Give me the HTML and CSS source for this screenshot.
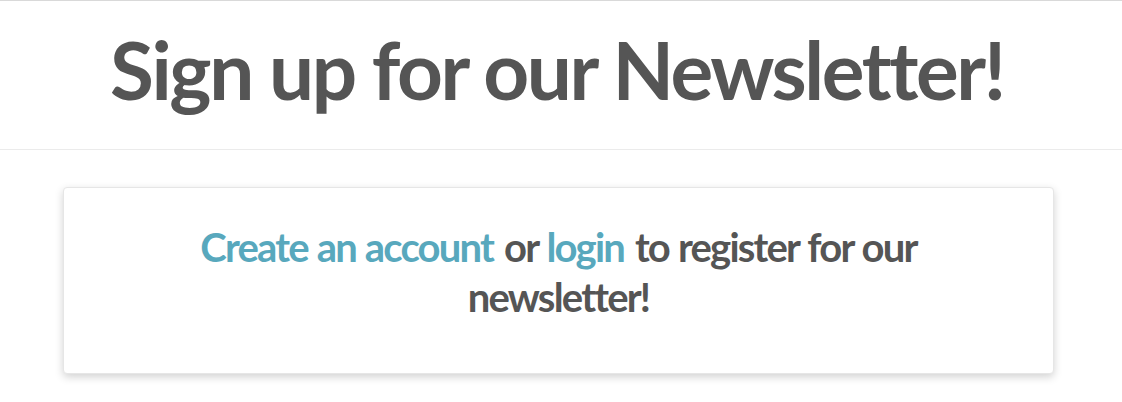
FILE: index.html
```html
<!DOCTYPE html>
<html lang="en">
<head>
<meta charset="utf-8">
<title>Newsletter</title>
<link rel="stylesheet" href="styles.css">
</head>
<body>
<header class="page-header">
  <h1 class="page-title">Sign up for our Newsletter!</h1>
</header>
<main class="content">
  <section class="card">
    <p class="card-text"><a href="#" class="link">Create an account</a> or <a href="#" class="link">login</a> to register for our newsletter!</p>
  </section>
</main>
</body>
</html>
```
FILE: styles.css
```css
html, body {
  margin: 0;
  padding: 0;
  background: #fff;
}
body {
  font-family: "Lato", "Open Sans", sans-serif;
  color: #555;
  border-top: 1px solid #d9d9d9;
}
.page-header {
  padding: 20px 0 32px;
  border-bottom: 1px solid #ebebeb;
  text-align: center;
}
.page-title {
  margin: 0 8px 0 0;
  font-size: 80px;
  line-height: 96px;
  font-weight: 700;
  letter-spacing: -2.4px;
  color: #555;
}
.content {
  padding: 37px 68px 28px 63px;
}
.card {
  background: #fff;
  border: 1px solid #e6e6e6;
  border-radius: 4px;
  box-shadow: 0 3px 8px rgba(0, 0, 0, 0.18);
  padding: 34px 120px 51px;
  text-align: center;
}
.card-text {
  margin: 0;
  font-size: 40px;
  line-height: 50px;
  font-weight: 700;
  letter-spacing: -1.8px;
  word-spacing: 1px;
  color: #555;
}
.link {
  color: #58a8bd;
  text-decoration: none;
  padding-right: 2px;
}
```
